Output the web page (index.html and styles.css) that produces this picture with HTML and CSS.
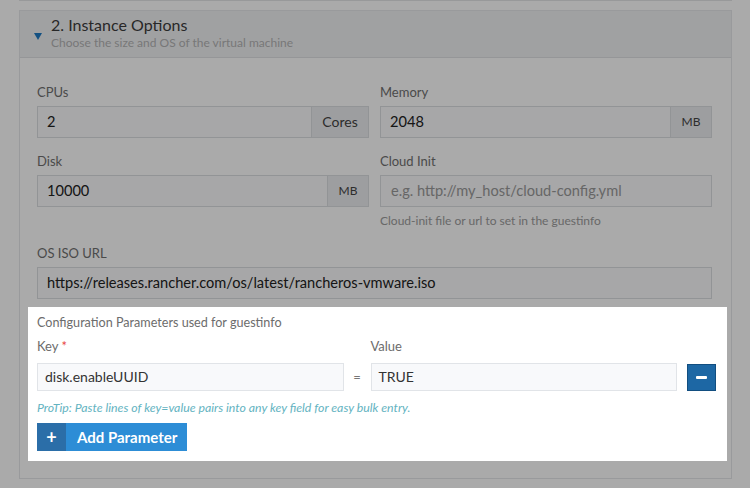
FILE: index.html
```html
<!DOCTYPE html>
<html lang="en">
<head>
<meta charset="utf-8">
<title>Instance Options</title>
<link rel="stylesheet" href="styles.css">
</head>
<body>
<div class="page">
  <div class="prev-card"></div>
  <section class="card">
    <header class="card-head">
      <span class="caret"></span>
      <div class="head-text">
        <div class="card-title">2. Instance Options</div>
        <div class="card-sub">Choose the size and OS of the virtual machine</div>
      </div>
    </header>
    <div class="card-body">
      <div class="grid2">
        <div class="field">
          <label class="lbl">CPUs</label>
          <div class="input-group">
            <div class="input">2</div>
            <div class="addon addon-wide">Cores</div>
          </div>
        </div>
        <div class="field">
          <label class="lbl">Memory</label>
          <div class="input-group">
            <div class="input">2048</div>
            <div class="addon">MB</div>
          </div>
        </div>
        <div class="field">
          <label class="lbl">Disk</label>
          <div class="input-group">
            <div class="input">10000</div>
            <div class="addon">MB</div>
          </div>
        </div>
        <div class="field">
          <label class="lbl">Cloud Init</label>
          <div class="input-group">
            <div class="input placeholder">e.g. http://my_host/cloud-config.yml</div>
          </div>
          <p class="help">Cloud-init file or url to set in the guestinfo</p>
        </div>
      </div>
      <div class="field field-full">
        <label class="lbl">OS ISO URL</label>
        <div class="input-group">
          <div class="input">https://releases.rancher.com/os/latest/rancheros-vmware.iso</div>
        </div>
      </div>

      <div class="spotlight">
        <div class="kv-title">Configuration Parameters used for guestinfo</div>
        <div class="kv-grid">
          <div class="kv-head">Key <span class="req">*</span></div>
          <div></div>
          <div class="kv-head">Value</div>
          <div></div>
          <div class="kv-input">disk.enableUUID</div>
          <div class="kv-eq">=</div>
          <div class="kv-input">TRUE</div>
          <div class="kv-action"><button class="btn-remove" type="button"><span class="minus"></span></button></div>
        </div>
        <p class="protip">ProTip: Paste lines of key=value pairs into any key field for easy bulk entry.</p>
        <button class="btn-add" type="button"><span class="btn-add-icon">+</span><span class="btn-add-label">Add Parameter</span></button>
      </div>
    </div>
  </section>
</div>
</body>
</html>
```
FILE: styles.css
```css
* { box-sizing: border-box; }
html, body { margin: 0; padding: 0; }
body {
  background: #fff;
  font-family: "Lato", "Open Sans", sans-serif;
  color: #333;
  width: 750px;
  height: 488px;
  overflow: hidden;
}
.page {
  padding: 0 18px 0 19px;
}
.prev-card {
  height: 1px;
  background: #e4e6e8;
  margin-bottom: 9px;
}
.card {
  border: 1px solid #e6e8ea;
  background: #fff;
  height: 469px;
}
.card-head {
  display: flex;
  align-items: center;
  height: 47px;
  padding: 0 0 3px 14px;
  background: #f1f2f4;
  border-bottom: 1px solid #e0e2e5;
}
.caret {
  width: 0; height: 0;
  border-left: 4px solid transparent;
  border-right: 4px solid transparent;
  border-top: 7px solid #1f7ac4;
  margin: 8px 9px 0 0;
}
.card-title {
  font-size: 16px;
  line-height: 20px;
  color: #3c3c3c;
}
.card-sub {
  font-size: 12px;
  line-height: 16px;
  color: #b4b4b4;
}
.card-body {
  padding: 24px 19px 0 17px;
}
.grid2 {
  display: grid;
  grid-template-columns: 1fr 1fr;
  column-gap: 11px;
  row-gap: 13px;
}
.field { display: flex; flex-direction: column; }
.lbl {
  font-size: 13px;
  line-height: 20px;
  color: #707070;
  margin-bottom: 4px;
}
.input-group {
  display: flex;
  height: 32px;
  border: 1px solid #dcdfe2;
  background: #fbfbfc;
}
.input {
  flex: 1;
  padding: 0 9px;
  font-size: 14.6px;
  line-height: 30px;
  color: #222;
  white-space: nowrap;
}
.input.placeholder { color: #9a9a9a; padding-left: 10px; }
.addon {
  width: 41px;
  background: #eceef0;
  border-left: 1px solid #dcdfe2;
  font-size: 12px;
  line-height: 30px;
  text-align: center;
  color: #444;
}
.addon-wide { width: 57px; font-size: 14px; }
.help {
  margin: 6px 0 0;
  font-size: 12px;
  line-height: 16px;
  color: #9c9c9c;
}
.field-full { margin-top: 14px; }

.spotlight {
  position: relative;
  z-index: 1;
  margin: 8px -15px 0 -9px;
  padding: 7px 11px 10px 9px;
  background: #fff;
  box-shadow: 0 0 0 2000px rgba(0, 0, 0, 0.335);
}
.kv-title {
  font-size: 12.6px;
  line-height: 18px;
  color: #6c6c6c;
}
.kv-grid {
  display: grid;
  grid-template-columns: 1fr 27px 1fr 39px;
  grid-template-rows: 18px 28px;
  row-gap: 8px;
  margin-top: 5px;
  align-items: center;
}
.kv-head {
  font-size: 13px;
  line-height: 18px;
  color: #6c6c6c;
}
.req { color: #e8463f; }
.kv-input {
  height: 28px;
  border: 1px solid #e1e4e8;
  background: #f8f9fb;
  padding: 0 7px;
  font-size: 14px;
  line-height: 26px;
  color: #333;
}
.kv-eq {
  text-align: center;
  font-size: 13px;
  color: #777;
}
.kv-action { display: flex; justify-content: flex-end; }
.btn-remove {
  width: 29px;
  height: 27px;
  padding: 0;
  border: 1px solid #124e80;
  background: #1d67a4;
  display: flex;
  align-items: center;
  justify-content: center;
}
.minus {
  width: 11px;
  height: 3px;
  background: #fff;
  border-radius: 1px;
}
.protip {
  margin: 9px 0 7px;
  font-size: 12.3px;
  line-height: 16px;
  font-style: italic;
  color: #63b3c1;
}
.btn-add {
  display: flex;
  height: 28px;
  padding: 0;
  border: 0;
  font-family: inherit;
  cursor: pointer;
}
.btn-add-icon {
  width: 29px;
  background: #2b6ea8;
  color: #fff;
  font-size: 18px;
  font-weight: 700;
  line-height: 28px;
  text-align: center;
}
.btn-add-label {
  width: 121px;
  background: #2d8dd6;
  color: #fff;
  font-size: 15px;
  font-weight: 700;
  line-height: 28px;
  padding-left: 11px;
  text-align: left;
}
```
